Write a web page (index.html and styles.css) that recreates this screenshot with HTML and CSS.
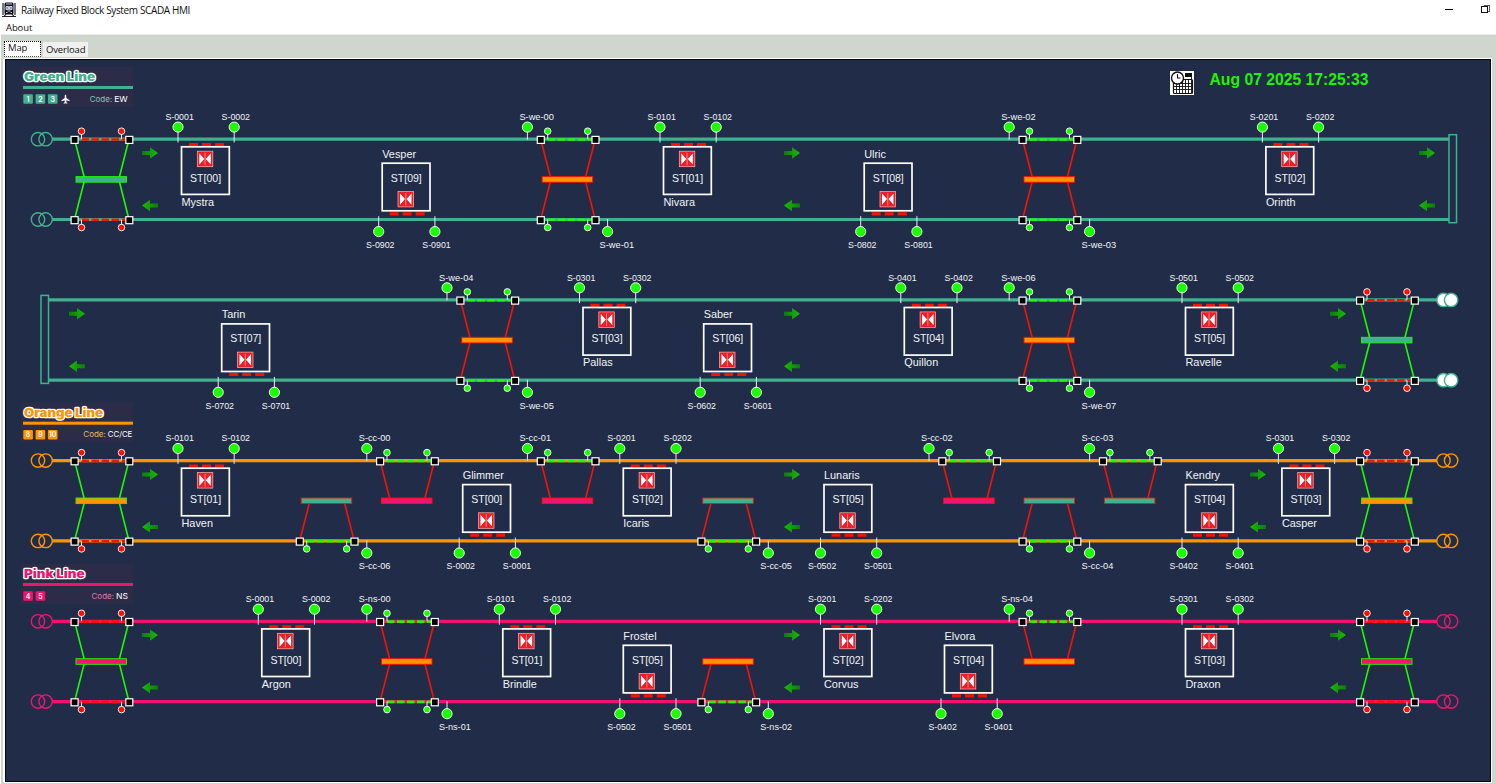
FILE: index.html
```html
<!DOCTYPE html>
<html lang="en">
<head>
<meta charset="utf-8">
<title>Railway Fixed Block System SCADA HMI</title>
<link rel="stylesheet" href="styles.css">
</head>
<body>
<div class="window">
  <header class="titlebar">
    <svg class="app-icon" width="14" height="15" viewBox="0 0 14 15">
      <path d="M1 1v12M13 1v12M0 14.5h14" stroke="#223" stroke-width="1.2"/>
      <rect x="2.5" y="0.5" width="9" height="12" rx="1.5" fill="#111122"/>
      <path d="M4 2h6M4 4.5h2.5v3H4zM7.5 4.5H10v3H7.5zM5.500 9h3M4 10.500h1.500M8.500 10.500H10" stroke="#dde" stroke-width="0.9" fill="#8890a8"/>
      <path d="M4 12l-2 2.500M10 12l2 2.500" stroke="#111" stroke-width="1.200"/>
    </svg>
    <span class="title">Railway Fixed Block System SCADA HMI</span>
    <svg class="controls" width="60" height="20" viewBox="0 0 60 20" shape-rendering="crispEdges">
      <rect x="8" y="9" width="8" height="1" fill="#000"/>
      <path d="M46.500 5.500h6v6h-2" fill="none" stroke="#555" stroke-width="1"/>
      <rect x="44.500" y="6.500" width="6" height="6" fill="#fff" stroke="#111"/>
    </svg>
  </header>
  <nav class="menubar"><span>About</span></nav>
  <main class="workspace">
    <div class="tabs"><span class="tab active">Map</span><span class="tab">Overload</span></div>
    <div class="panel"><svg id="map" class="map" viewBox="6 60 1484 721" width="1484" height="721"></svg></div>
  </main>
</div>
<script src="map.js"></script>
</body>
</html>
```

FILE: styles.css
```css
body { margin: 0; background: #fff; font-family: "Open Sans", "Noto Sans", sans-serif; color: #111; }
.window { width: 1496px; height: 784px; display: flex; flex-direction: column; overflow: hidden; }
.titlebar { display: flex; align-items: flex-start; height: 20px; padding: 2px 0 0 2px; box-sizing: border-box; }
.title { flex: 1; font-size: 10px; line-height: 17px; margin-left: 5px; letter-spacing: -0.37px; }
.controls { margin-top: -2px; margin-right: -1px; }
.menubar { height: 14px; padding-left: 6px; font-size: 9.5px; line-height: 15px; letter-spacing: -0.1px; }
.workspace { flex: 1; display: flex; flex-direction: column; background: #cfd6ce; border-top: 1px solid #e9ecea; margin-left: 1px; }
.tabs { display: flex; align-items: flex-end; height: 22px; padding-left: 3px; }
.tab { height: 15px; padding: 0 3px; background: #f0f0f0; font-size: 9.5px; line-height: 16px; letter-spacing: -0.15px; }
.tab.active { width: 29px; height: 14px; line-height: 12px; background: #fff; border: 1px dotted #111; border-bottom-color: #555; margin-right: 2px; }
.panel { width: 1484px; height: 721px; border: 1px solid #05070d; outline: 1px solid #fff; margin: 2px 0 0 4px; background: #212d48; box-shadow: -2px 0 #fff; }
.map { display: block; font-family: "Liberation Sans", Arial, sans-serif; }
.label { font-size: 9.4px; fill: #f2f3f6; }
.station { font-size: 10.9px; fill: #f2f3f6; }
.box { fill: none; stroke: #fff; stroke-width: 1.7; }
.node { fill: #000; stroke: #fff; stroke-width: 1.2; }
.stem { stroke: #e8ebf2; stroke-width: 1; }
.lamp { stroke: #fff; stroke-width: 0.9; }
.clock { font-size: 15.8px; font-weight: bold; fill: #1df500; }
.legend { font-family: Inter, "Open Sans", sans-serif; font-size: 7.8px; }
.legend-title { font-size: 11.2px; font-weight: 900; stroke: #fff; stroke-width: 2.4; paint-order: stroke; stroke-linejoin: round; }
.badge { font-size: 7px; fill: #fff; font-weight: 600; text-anchor: middle; }
```

FILE: map.js
```js
const GREEN = '#41b08e', ORANGE = '#ff9400', PINK = '#f0146e', LIT = '#1cfc00', RED = '#fb1100';
const out = [];
const add = s => out.push(s);
const lineY = i => 139.2 + 160.7 * i;
const GAP = 80.3;

function text(x, y, s, cls, width, extra = '') {
  add(`<text class="${cls}" x="${x}" y="${y}"${width ? ` textLength="${width}" lengthAdjust="spacingAndGlyphs"` : ''} ${extra}>${s}</text>`);
}
function track(y, x1, x2, color) {
  add(`<path d="M${x1} ${y}H${x2}" stroke="${color}" stroke-width="3.200"/>`);
}
function loops(x, y, color, fill) {
  add(`<g fill="${fill}" stroke="${color}" stroke-width="1.400"><circle cx="${x}" cy="${y}" r="6.700"/><circle cx="${x + 7.6}" cy="${y}" r="6.700"/></g>`);
}
// kind: 'both', 'top' or 'bottom'; active junctions show green legs and red lamps
function junction(x, row, kind, color, active) {
  const top = lineY(row), bottom = top + GAP, mid = top + 40.1;
  const leg = active ? LIT : RED, lamp = active ? RED : LIT;
  const half = (y, d) => {
    add(`<path d="M${x} ${y}L${x + 10.300} ${mid}M${x + 54.500} ${y}L${x + 44.300} ${mid}" stroke="${leg}" stroke-width="1.600" fill="none"/>`);
    add(`<path d="M${x + 7} ${y + 0.300}H${x + 51}" stroke="${lamp}" stroke-width="2.600" stroke-dasharray="7.500 2.500"/>`);
    for (const dx of [7, 47]) {
      add(`<path class="stem" d="M${x + dx} ${y}v${d * 6}"/><circle class="lamp" cx="${x + dx}" cy="${y + d * 8}" r="3.300" fill="${lamp}"/>`);
    }
    for (const dx of [0, 54.700]) add(`<rect class="node" x="${x + dx - 3.400}" y="${y - 2.800}" width="7" height="7"/>`);
  };
  if (kind !== 'bottom') half(top, -1);
  if (kind !== 'top') half(bottom, 1);
  add(`<rect x="${x + 1.500}" y="${mid - 2.700}" width="50.500" height="5.600" fill="${color}" stroke="${leg}" stroke-width="0.900"/>`);
}
function signal(x, row, d, name, block) {
  const y = lineY(row) + (d > 0 ? GAP : 0);
  add(`<path class="stem" d="M${x} ${y - (block ? 0.5 : 3.300) * d}V${y + 8 * d}"/><circle class="lamp" cx="${x}" cy="${y + 12.100 * d}" r="5.100" fill="${LIT}"/>`);
  const width = !block ? 28.400 : name.includes('we') ? 34.500 : 31.700;
  text(x - (block ? 8 : 12.600), d > 0 ? y + 28.500 : y - 19.200, name, 'label', width);
}
function station(x, row, d, id, name, first, second) {
  const y = lineY(row), bx = x + 3.500, by = d < 0 ? y + 7.600 : y + 24;
  signal(x, row, d, 'S-' + first);
  signal(x + 56.200, row, d, 'S-' + second);
  add(`<path d="M${bx + 7.500} ${d < 0 ? y + 5.500 : y + GAP - 5.700}h35" stroke="${RED}" stroke-width="3.200" stroke-dasharray="9 4"/>`);
  add(`<rect class="box" x="${bx}" y="${by}" width="47.800" height="47.600"/>`);
  const ix = bx + 15.800, iy = d < 0 ? y + 12 : y + 52.200;
  add(`<rect x="${ix}" y="${iy}" width="15.500" height="15.500" fill="#ee1c24" stroke="#f9b5b5" stroke-width="0.700"/><path d="M${ix + 2} ${iy + 2}l5 5.700l-5 5.700zM${ix + 13.500} ${iy + 2}l-5 5.700l5 5.700z" fill="#fff"/><path d="M${ix + 7.750} ${iy + 1.500}v12.500" stroke="#fbb" stroke-width="0.700"/>`);
  text(bx + 8.600, y + 42.500, `ST[${id}]`, 'station', 31);
  text(bx, d < 0 ? y + 66.500 : y + 18.500, name, 'station');
}
function arrows(x, row) {
  const y = lineY(row) + 13.800;
  add(`<path d="M${x} ${y - 2}h8v-3.700l8 5.700l-8 5.700v-3.700h-8z" fill="url(#goRight)"/>`);
  add(`<path d="M${x + 16} ${y + 50.500}h-8v-3.700l-8 5.700l8 5.700v-3.700h8z" fill="url(#goLeft)"/>`);
}
function legend(dy, title, width, color, badges, code, codeX, labelColor) {
  add(`<g class="legend" transform="translate(0 ${dy})"><rect x="21" y="67" width="112" height="40" fill="#2d2c48"/>`);
  text(24, 81, title, 'legend-title', width, `fill="${color}"`);
  add(`<rect x="23" y="86" width="110" height="3" fill="${color}"/>`);
  badges.forEach((b, i) => {
    add(`<rect x="${23.300 + i * 12.300}" y="94.200" width="9.600" height="9.600" rx="1" fill="${color}"/>`);
    text(28.100 + i * 12.300, 101.600, b, 'badge');
  });
  text(codeX, 101.500, 'Code:', 'code', 22.500, `fill="${labelColor}"`);
  text(codeX + 24.500, 101.500, code, 'code', code.length > 2 ? 24.500 : code === 'NS' ? 12 : 13.500, 'fill="#fff"');
  add('</g>');
}

add(`<defs><linearGradient id="goRight"><stop stop-color="#0d7a0e"/><stop offset="1" stop-color="#1abc04"/></linearGradient>
<linearGradient id="goLeft"><stop stop-color="#1abc04"/><stop offset="1" stop-color="#0d7a0e"/></linearGradient></defs>`);

legend(0, 'Green Line', 71, GREEN, ['1', '2', '3'], 'EW', 89.700, '#7cc9b4');
add('<path d="M65.500 94.800c.6 0 .8.700.8 1.400v1.700l3.200 2.300v1l-3.200-1v2l1 .8v.7l-1.800-.5l-1.800.5v-.7l1-.8v-2l-3.200 1v-1l3.200-2.300v-1.700c0-.7.200-1.400.8-1.400z" fill="#fff"/>');
legend(335.700, 'Orange Line', 79, ORANGE, ['8', '9', '10'], 'CC/CE', 83.300, '#e5b866');
legend(497, 'Pink Line', 60.500, PINK, ['4', '5'], 'NS', 91.500, '#dd79ad');

const colors = [GREEN, GREEN, ORANGE, PINK];
colors.forEach((color, row) => {
  for (const y of [lineY(row), lineY(row) + GAP]) {
    track(y, row === 1 ? 48 : 52, row === 0 ? 1449 : 1437, color);
    if (row !== 1) loops(38, y, color, 'none');
    if (row !== 0) loops(1443.500, y, color, row === 1 ? '#fff' : 'none');
  }
});
for (const [x, row] of [[1449, 0], [41, 1]]) {
  add(`<rect x="${x}" y="${lineY(row) - 4.500}" width="7.500" height="88" fill="#212d48" stroke="${GREEN}" stroke-width="1.500"/>`);
}

[
  [74.5, 0, 'both', GREEN, true], [540.7, 0, 'both', ORANGE], [1022.5, 0, 'both', ORANGE],
  [460.3, 1, 'both', ORANGE], [1022.5, 1, 'both', ORANGE], [1360, 1, 'both', GREEN, true],
  [74.5, 2, 'both', ORANGE, true], [380, 2, 'top', PINK], [299.7, 2, 'bottom', GREEN],
  [540.7, 2, 'top', PINK], [701.3, 2, 'bottom', GREEN], [942.2, 2, 'top', PINK],
  [1022.5, 2, 'bottom', GREEN], [1102.9, 2, 'top', GREEN], [1360, 2, 'both', ORANGE, true],
  [74.5, 3, 'both', PINK, true], [380, 3, 'both', ORANGE], [701.3, 3, 'bottom', ORANGE],
  [1022.5, 3, 'top', ORANGE], [1360, 3, 'both', PINK, true]
].forEach(j => junction(...j));

[
  [178, 0, -1, '00', 'Mystra', '0001', '0002'], [660, 0, -1, '01', 'Nivara', '0101', '0102'],
  [1262.4, 0, -1, '02', 'Orinth', '0201', '0202'], [378.7, 0, 1, '09', 'Vesper', '0902', '0901'],
  [860.7, 0, 1, '08', 'Ulric', '0802', '0801'],
  [579.5, 1, -1, '03', 'Pallas', '0301', '0302'], [900.8, 1, -1, '04', 'Quillon', '0401', '0402'],
  [1182, 1, -1, '05', 'Ravelle', '0501', '0502'], [218.2, 1, 1, '07', 'Tarin', '0702', '0701'],
  [700.2, 1, 1, '06', 'Saber', '0602', '0601'],
  [178, 2, -1, '01', 'Haven', '0101', '0102'], [619.8, 2, -1, '02', 'Icaris', '0201', '0202'],
  [1278.4, 2, -1, '03', 'Casper', '0301', '0302'], [459.2, 2, 1, '00', 'Glimmer', '0002', '0001'],
  [820.5, 2, 1, '05', 'Lunaris', '0502', '0501'], [1182, 2, 1, '04', 'Kendry', '0402', '0401'],
  [258.3, 3, -1, '00', 'Argon', '0001', '0002'], [499.3, 3, -1, '01', 'Brindle', '0101', '0102'],
  [820.5, 3, -1, '02', 'Corvus', '0201', '0202'], [1182, 3, -1, '03', 'Draxon', '0301', '0302'],
  [619.8, 3, 1, '05', 'Frostel', '0502', '0501'], [941, 3, 1, '04', 'Elvora', '0402', '0401']
].forEach(s => station(...s));

[
  [527.4, 0, -1, 'we-00'], [607.6, 0, 1, 'we-01'], [1009.2, 0, -1, 'we-02'], [1089.6, 0, 1, 'we-03'],
  [447, 1, -1, 'we-04'], [527.4, 1, 1, 'we-05'], [1009.2, 1, -1, 'we-06'], [1089.6, 1, 1, 'we-07'],
  [366.8, 2, -1, 'cc-00'], [527.4, 2, -1, 'cc-01'], [929, 2, -1, 'cc-02'], [1089.6, 2, -1, 'cc-03'],
  [1089.6, 2, 1, 'cc-04'], [768.3, 2, 1, 'cc-05'], [366.8, 2, 1, 'cc-06'],
  [366.8, 3, -1, 'ns-00'], [447, 3, 1, 'ns-01'], [768.3, 3, 1, 'ns-02'], [1009.2, 3, -1, 'ns-04']
].forEach(([x, row, d, name]) => signal(x, row, d, 'S-' + name, true));

[[142, 784, 1419], [69, 784, 1330], [142, 784, 1250], [142, 784, 1330]]
  .forEach((xs, row) => xs.forEach(x => arrows(x, row)));

add(`<g><rect x="1170" y="71" width="24" height="24" fill="#fff"/>
<path d="M1185 73h7v4h-7z" fill="#111"/>
<rect x="1173.500" y="79.500" width="19" height="14" rx="1" fill="#fff" stroke="#111" stroke-width="1.200"/>
<path d="M1176.500 79v14M1179.500 79v14M1182.500 79v14M1185.500 79v14M1188.500 79v14M1191.500 76v17M1174 83.500h18M1174 86.500h18M1174 89.500h18" stroke="#111" stroke-width="0.900"/>
<circle cx="1177.500" cy="78" r="6" fill="#fff" stroke="#111" stroke-width="1.400"/>
<path d="M1177.500 74v4h3" fill="none" stroke="#111" stroke-width="1.100"/></g>`);
text(1209.500, 85.200, 'Aug 07 2025 17:25:33', 'clock', 159);

document.getElementById('map').innerHTML = out.join('');
```
